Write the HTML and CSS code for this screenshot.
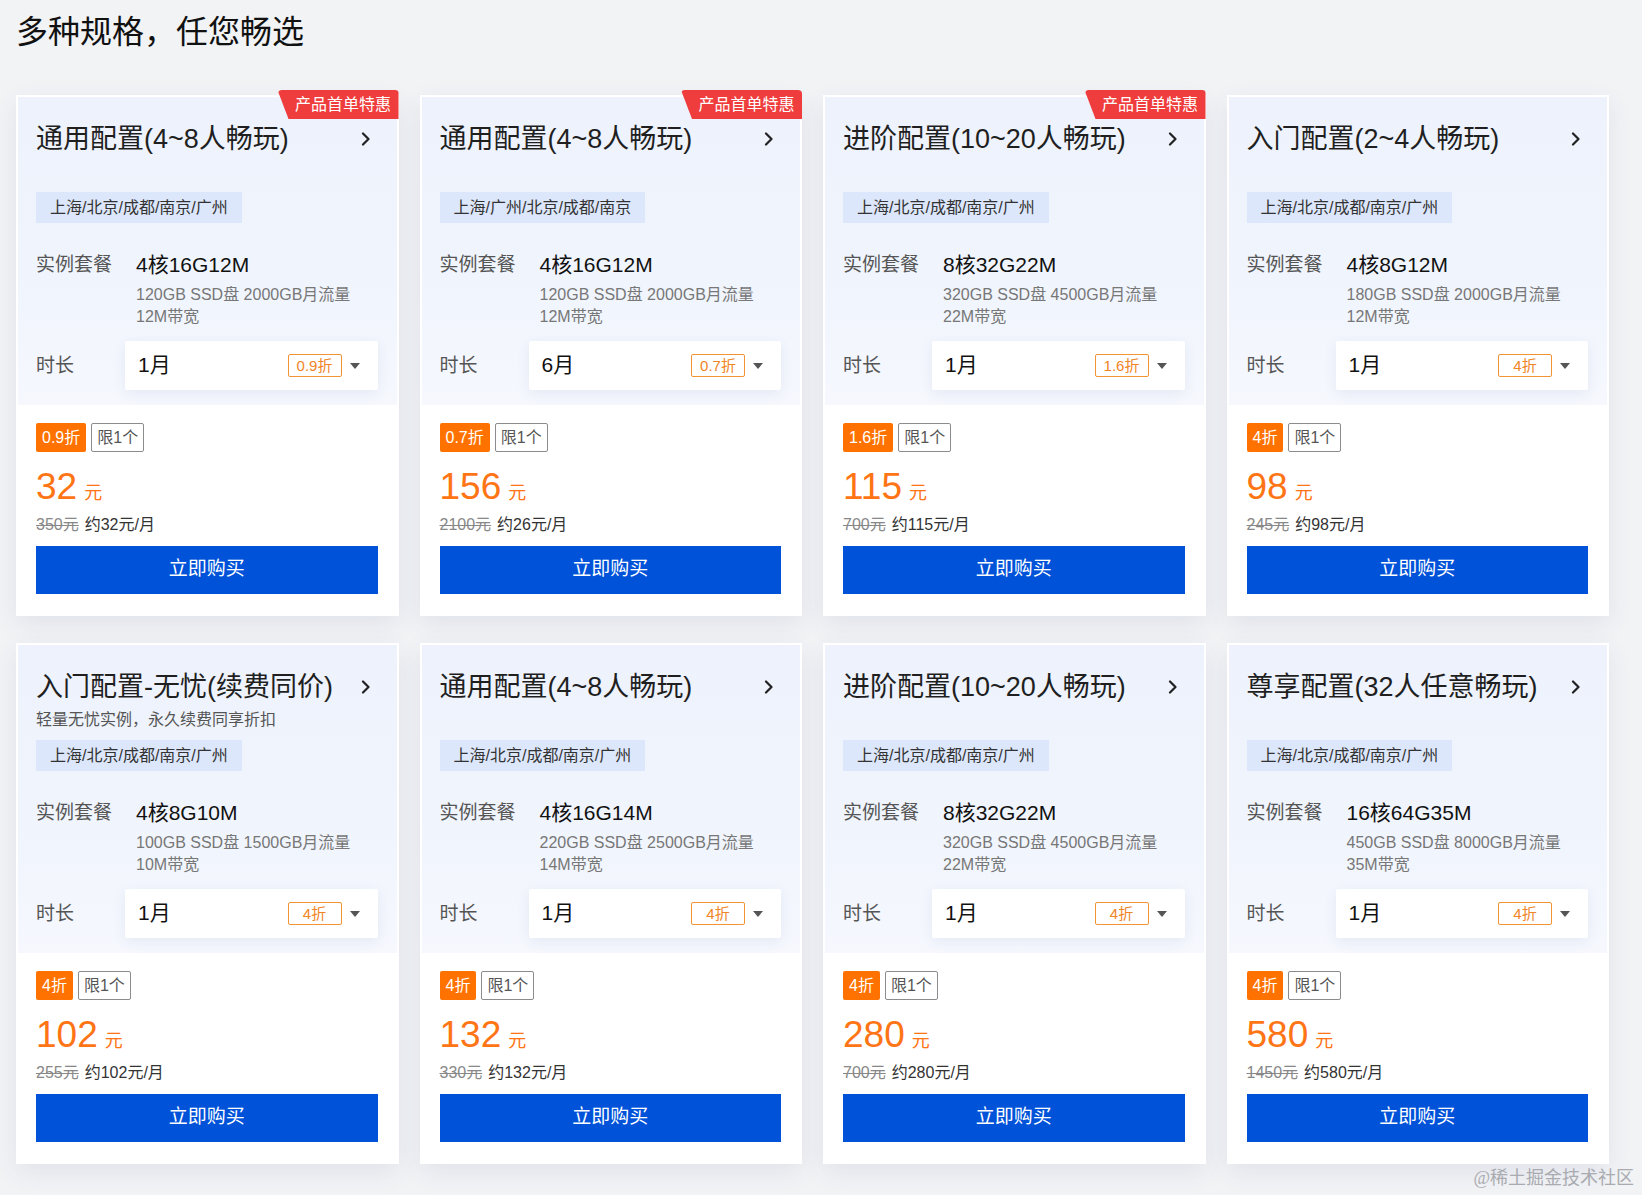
FILE: index.html
```html
<!DOCTYPE html>
<html lang="zh-CN">
<head>
<meta charset="utf-8">
<title>多种规格，任您畅选</title>
<link rel="stylesheet" href="styles.css">
</head>
<body>
<div class="page">
  <h1 class="heading">多种规格，任您畅选</h1>
  <div class="grid">

    <div class="card">
      <div class="badge">产品首单特惠</div>
      <div class="card-top">
        <div class="title-row"><span class="title">通用配置(4~8人畅玩)</span><svg class="arrow" viewBox="0 0 10 14" width="10" height="14"><polyline points="2,1.5 7.5,7 2,12.5" /></svg></div>
        <div class="sub"></div>
        <div class="region">上海/北京/成都/南京/广州</div>
        <div class="spec"><div class="label">实例套餐</div><div class="spec-body"><div class="spec-main">4核16G12M</div><div class="spec-detail">120GB SSD盘 2000GB月流量<br>12M带宽</div></div></div>
        <div class="duration"><div class="label dlabel">时长</div><div class="select"><span class="sel-val">1月</span><span class="sel-disc">0.9折</span><span class="caret"></span></div></div>
      </div>
      <div class="card-bottom">
        <div class="tags"><span class="tag-disc">0.9折</span><span class="tag-limit">限1个</span></div>
        <div class="price"><span class="num">32</span><span class="unit">元</span></div>
        <div class="old"><s>350元</s><span class="per">约32元/月</span></div>
        <button class="buy">立即购买</button>
      </div>
    </div>

    <div class="card">
      <div class="badge">产品首单特惠</div>
      <div class="card-top">
        <div class="title-row"><span class="title">通用配置(4~8人畅玩)</span><svg class="arrow" viewBox="0 0 10 14" width="10" height="14"><polyline points="2,1.5 7.5,7 2,12.5" /></svg></div>
        <div class="sub"></div>
        <div class="region">上海/广州/北京/成都/南京</div>
        <div class="spec"><div class="label">实例套餐</div><div class="spec-body"><div class="spec-main">4核16G12M</div><div class="spec-detail">120GB SSD盘 2000GB月流量<br>12M带宽</div></div></div>
        <div class="duration"><div class="label dlabel">时长</div><div class="select"><span class="sel-val">6月</span><span class="sel-disc">0.7折</span><span class="caret"></span></div></div>
      </div>
      <div class="card-bottom">
        <div class="tags"><span class="tag-disc">0.7折</span><span class="tag-limit">限1个</span></div>
        <div class="price"><span class="num">156</span><span class="unit">元</span></div>
        <div class="old"><s>2100元</s><span class="per">约26元/月</span></div>
        <button class="buy">立即购买</button>
      </div>
    </div>

    <div class="card">
      <div class="badge">产品首单特惠</div>
      <div class="card-top">
        <div class="title-row"><span class="title">进阶配置(10~20人畅玩)</span><svg class="arrow" viewBox="0 0 10 14" width="10" height="14"><polyline points="2,1.5 7.5,7 2,12.5" /></svg></div>
        <div class="sub"></div>
        <div class="region">上海/北京/成都/南京/广州</div>
        <div class="spec"><div class="label">实例套餐</div><div class="spec-body"><div class="spec-main">8核32G22M</div><div class="spec-detail">320GB SSD盘 4500GB月流量<br>22M带宽</div></div></div>
        <div class="duration"><div class="label dlabel">时长</div><div class="select"><span class="sel-val">1月</span><span class="sel-disc">1.6折</span><span class="caret"></span></div></div>
      </div>
      <div class="card-bottom">
        <div class="tags"><span class="tag-disc">1.6折</span><span class="tag-limit">限1个</span></div>
        <div class="price"><span class="num">115</span><span class="unit">元</span></div>
        <div class="old"><s>700元</s><span class="per">约115元/月</span></div>
        <button class="buy">立即购买</button>
      </div>
    </div>

    <div class="card">
      <div class="card-top">
        <div class="title-row"><span class="title">入门配置(2~4人畅玩)</span><svg class="arrow" viewBox="0 0 10 14" width="10" height="14"><polyline points="2,1.5 7.5,7 2,12.5" /></svg></div>
        <div class="sub"></div>
        <div class="region">上海/北京/成都/南京/广州</div>
        <div class="spec"><div class="label">实例套餐</div><div class="spec-body"><div class="spec-main">4核8G12M</div><div class="spec-detail">180GB SSD盘 2000GB月流量<br>12M带宽</div></div></div>
        <div class="duration"><div class="label dlabel">时长</div><div class="select"><span class="sel-val">1月</span><span class="sel-disc">4折</span><span class="caret"></span></div></div>
      </div>
      <div class="card-bottom">
        <div class="tags"><span class="tag-disc">4折</span><span class="tag-limit">限1个</span></div>
        <div class="price"><span class="num">98</span><span class="unit">元</span></div>
        <div class="old"><s>245元</s><span class="per">约98元/月</span></div>
        <button class="buy">立即购买</button>
      </div>
    </div>

    <div class="card">
      <div class="card-top">
        <div class="title-row"><span class="title">入门配置-无忧(续费同价)</span><svg class="arrow" viewBox="0 0 10 14" width="10" height="14"><polyline points="2,1.5 7.5,7 2,12.5" /></svg></div>
        <div class="sub">轻量无忧实例，永久续费同享折扣</div>
        <div class="region">上海/北京/成都/南京/广州</div>
        <div class="spec"><div class="label">实例套餐</div><div class="spec-body"><div class="spec-main">4核8G10M</div><div class="spec-detail">100GB SSD盘 1500GB月流量<br>10M带宽</div></div></div>
        <div class="duration"><div class="label dlabel">时长</div><div class="select"><span class="sel-val">1月</span><span class="sel-disc">4折</span><span class="caret"></span></div></div>
      </div>
      <div class="card-bottom">
        <div class="tags"><span class="tag-disc">4折</span><span class="tag-limit">限1个</span></div>
        <div class="price"><span class="num">102</span><span class="unit">元</span></div>
        <div class="old"><s>255元</s><span class="per">约102元/月</span></div>
        <button class="buy">立即购买</button>
      </div>
    </div>

    <div class="card">
      <div class="card-top">
        <div class="title-row"><span class="title">通用配置(4~8人畅玩)</span><svg class="arrow" viewBox="0 0 10 14" width="10" height="14"><polyline points="2,1.5 7.5,7 2,12.5" /></svg></div>
        <div class="sub"></div>
        <div class="region">上海/北京/成都/南京/广州</div>
        <div class="spec"><div class="label">实例套餐</div><div class="spec-body"><div class="spec-main">4核16G14M</div><div class="spec-detail">220GB SSD盘 2500GB月流量<br>14M带宽</div></div></div>
        <div class="duration"><div class="label dlabel">时长</div><div class="select"><span class="sel-val">1月</span><span class="sel-disc">4折</span><span class="caret"></span></div></div>
      </div>
      <div class="card-bottom">
        <div class="tags"><span class="tag-disc">4折</span><span class="tag-limit">限1个</span></div>
        <div class="price"><span class="num">132</span><span class="unit">元</span></div>
        <div class="old"><s>330元</s><span class="per">约132元/月</span></div>
        <button class="buy">立即购买</button>
      </div>
    </div>

    <div class="card">
      <div class="card-top">
        <div class="title-row"><span class="title">进阶配置(10~20人畅玩)</span><svg class="arrow" viewBox="0 0 10 14" width="10" height="14"><polyline points="2,1.5 7.5,7 2,12.5" /></svg></div>
        <div class="sub"></div>
        <div class="region">上海/北京/成都/南京/广州</div>
        <div class="spec"><div class="label">实例套餐</div><div class="spec-body"><div class="spec-main">8核32G22M</div><div class="spec-detail">320GB SSD盘 4500GB月流量<br>22M带宽</div></div></div>
        <div class="duration"><div class="label dlabel">时长</div><div class="select"><span class="sel-val">1月</span><span class="sel-disc">4折</span><span class="caret"></span></div></div>
      </div>
      <div class="card-bottom">
        <div class="tags"><span class="tag-disc">4折</span><span class="tag-limit">限1个</span></div>
        <div class="price"><span class="num">280</span><span class="unit">元</span></div>
        <div class="old"><s>700元</s><span class="per">约280元/月</span></div>
        <button class="buy">立即购买</button>
      </div>
    </div>

    <div class="card">
      <div class="card-top">
        <div class="title-row"><span class="title">尊享配置(32人任意畅玩)</span><svg class="arrow" viewBox="0 0 10 14" width="10" height="14"><polyline points="2,1.5 7.5,7 2,12.5" /></svg></div>
        <div class="sub"></div>
        <div class="region">上海/北京/成都/南京/广州</div>
        <div class="spec"><div class="label">实例套餐</div><div class="spec-body"><div class="spec-main">16核64G35M</div><div class="spec-detail">450GB SSD盘 8000GB月流量<br>35M带宽</div></div></div>
        <div class="duration"><div class="label dlabel">时长</div><div class="select"><span class="sel-val">1月</span><span class="sel-disc">4折</span><span class="caret"></span></div></div>
      </div>
      <div class="card-bottom">
        <div class="tags"><span class="tag-disc">4折</span><span class="tag-limit">限1个</span></div>
        <div class="price"><span class="num">580</span><span class="unit">元</span></div>
        <div class="old"><s>1450元</s><span class="per">约580元/月</span></div>
        <button class="buy">立即购买</button>
      </div>
    </div>

  </div>
  <div class="watermark">@稀土掘金技术社区</div>
</div>
</body>
</html>
```
FILE: styles.css
```css
* { box-sizing: border-box; }
html, body { margin: 0; padding: 0; }
body {
  background: #f2f3f5;
  font-family: "Liberation Sans", "Noto Sans CJK SC", sans-serif;
  color: #222;
  width: 1642px;
  height: 1195px;
  overflow: hidden;
}
.page {
  position: relative;
  height: 1195px;
  padding: 12px 0 0 16px;
}
.heading {
  margin: 0;
  font-size: 32px;
  line-height: 40px;
  font-weight: normal;
  color: #111;
}
.grid {
  margin-top: 43px;
  display: grid;
  grid-template-columns: repeat(4, 382.5px);
  column-gap: 21px;
  row-gap: 27px;
}
.card {
  position: relative;
  background: #fff;
  border: 2px solid #fff;
  box-shadow: 0 8px 24px rgba(40, 70, 130, 0.09);
}
.badge {
  position: absolute;
  top: -7px;
  right: -2px;
  width: 121px;
  height: 29px;
  padding-left: 10px;
  background: #ef3c3c;
  color: #fff;
  font-size: 16px;
  line-height: 29px;
  text-align: center;
  border-radius: 4px 4px 0 0;
  clip-path: polygon(0 0, 100% 0, 100% 100%, 11px 100%);
}
.card-top {
  padding: 22px 19px 15px 18px;
  background: linear-gradient(180deg, #edf2fc 0%, #f1f5fd 70%, #f6f8fe 100%);
}
.title-row {
  height: 40px;
  display: flex;
  align-items: center;
  justify-content: space-between;
}
.title {
  font-size: 27px;
  line-height: 40px;
  color: #1f1f1f;
  white-space: nowrap;
}
.arrow {
  margin-right: 7px;
  fill: none;
  stroke: #222;
  stroke-width: 2.2;
  stroke-linecap: round;
  stroke-linejoin: round;
}
.sub {
  height: 33px;
  font-size: 16px;
  line-height: 26px;
  color: #555;
}
.region {
  width: fit-content;
  height: 31px;
  padding: 0 14px;
  background: #dde7fb;
  font-size: 16px;
  line-height: 31px;
  color: #333;
}
.spec {
  margin-top: 27px;
  display: flex;
}
.label {
  width: 100px;
  flex: none;
  font-size: 19px;
  line-height: 30px;
  color: #555;
}
.spec-main {
  font-size: 21px;
  line-height: 30px;
  color: #111;
}
.spec-detail {
  margin-top: 4px;
  font-size: 16px;
  line-height: 22px;
  color: #777;
}
.duration {
  margin-top: 13px;
  display: flex;
}
.dlabel {
  width: 89px;
  line-height: 49px;
}
.select {
  flex: 1;
  height: 49px;
  display: flex;
  align-items: center;
  padding: 0 18px 0 13px;
  background: #fff;
  border-radius: 2px;
  box-shadow: 0 4px 14px rgba(40, 70, 130, 0.08);
}
.sel-val {
  flex: 1;
  font-size: 21px;
  line-height: 24px;
  margin-bottom: 1px;
  color: #111;
}
.sel-disc {
  width: 54px;
  height: 23px;
  border: 1px solid #f29433;
  border-radius: 2px;
  color: #f08526;
  font-size: 15px;
  line-height: 21px;
  text-align: center;
}
.caret {
  margin-left: 8px;
  width: 0;
  height: 0;
  border-top: 6px solid #555;
  border-left: 5px solid transparent;
  border-right: 5px solid transparent;
}
.card-bottom {
  padding: 18px 19px 20px 18px;
  background: #fff;
}
.tags {
  display: flex;
  height: 29px;
}
.tag-disc {
  height: 29px;
  padding: 0 6px;
  background: #ff7200;
  color: #fff;
  font-size: 16px;
  line-height: 29px;
  border-radius: 2px;
}
.tag-limit {
  margin-left: 5px;
  height: 29px;
  padding: 0 5px;
  border: 1px solid #8c8c8c;
  color: #555;
  font-size: 16px;
  line-height: 27px;
  border-radius: 2px;
}
.price {
  margin-top: 13px;
  font-size: 37px;
  line-height: 44px;
  color: #ff7414;
}
.unit {
  margin-left: 7px;
  font-size: 18px;
  line-height: 1;
}
.old {
  margin-top: 5px;
  font-size: 16px;
  line-height: 22px;
}
.old s {
  color: #888;
}
.per {
  margin-left: 6px;
  color: #333;
}
.buy {
  display: block;
  width: 100%;
  margin-top: 10px;
  height: 48px;
  border: none;
  padding: 0 0 2px;
  background: #0052d9;
  color: #fff;
  font-family: "Liberation Sans", "Noto Sans CJK SC", sans-serif;
  font-size: 19px;
  line-height: 46px;
  cursor: pointer;
}
.watermark {
  position: absolute;
  right: 8px;
  top: 1166px;
  font-family: "Liberation Serif", "Noto Sans CJK SC", serif;
  font-size: 18px;
  line-height: 24px;
  color: #a9abb0;
}
```
